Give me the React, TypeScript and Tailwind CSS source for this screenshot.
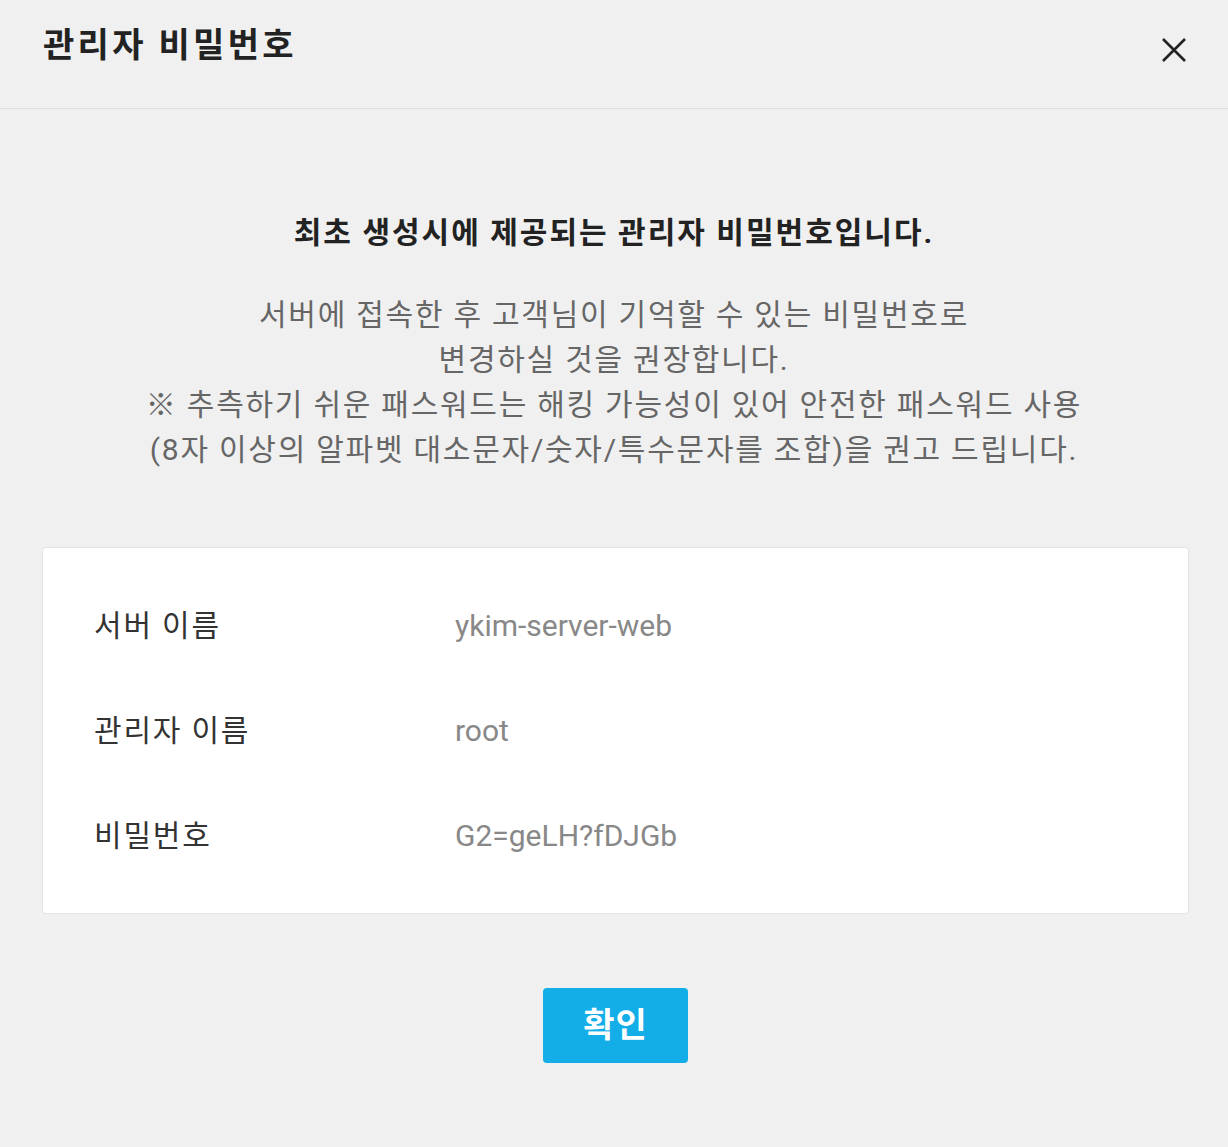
import React from "react";

const rows = [
  { label: "서버 이름", value: "ykim-server-web" },
  { label: "관리자 이름", value: "root" },
  { label: "비밀번호", value: "G2=geLH?fDJGb" },
];

export default function App() {
  return (
    <div
      className="min-h-[1147px] w-full bg-[#f0f0f0] text-[#222]"
      style={{ fontFamily: "Roboto, 'Noto Sans CJK KR', sans-serif" }}
    >
      {/* header */}
      <div className="flex h-[109px] items-start justify-between border-b border-[#e0e0e0] pl-[43px] pr-[40px]">
        <h1 className="mt-[20px] text-[34px] font-bold leading-[50px] tracking-[3.3px] text-[#222]">관리자 비밀번호</h1>
        <button className="mt-[36px] flex h-[28px] w-[28px] items-center justify-center text-[#222]">
          <svg width="26" height="26" viewBox="0 0 26 26" fill="none" stroke="currentColor" strokeWidth="2.6">
            <path d="M2 2L24 24M24 2L2 24" />
          </svg>
        </button>
      </div>

      {/* body */}
      <div className="flex flex-col items-center px-[40px] pt-[101px]">
        <p className="text-[30px] font-bold leading-[45px] tracking-[2px] text-[#222]">
          최초 생성시에 제공되는 관리자 비밀번호입니다.
        </p>
        <p className="mt-[37px] text-center text-[30px] leading-[45px] tracking-[1.75px] text-[#666]">
          서버에 접속한 후 고객님이 기억할 수 있는 비밀번호로
          <br />
          변경하실 것을 권장합니다.
          <br />※ 추측하기 쉬운 패스워드는 해킹 가능성이 있어 안전한 패스워드 사용
          <br />
          (8자 이상의 알파벳 대소문자/숫자/특수문자를 조합)을 권고 드립니다.
        </p>
      </div>

      <div className="ml-[42px] mr-[39px] pt-[75px]">
        <div className="rounded-[4px] border border-[#e4e4e4] bg-white px-[51px] py-[25px]">
          {rows.map((r) => (
            <div key={r.label} className="flex h-[105px] items-center text-[30px]">
              <div className="w-[361px] tracking-[1.8px] text-[#333]">{r.label}</div>
              <div className="text-[#888]">{r.value}</div>
            </div>
          ))}
        </div>
      </div>

      <div className="flex justify-center pl-[3px] pt-[74px]">
        <button className="h-[75px] w-[145px] rounded-[4px] bg-[#13ade8] text-[34px] font-bold tracking-[1px] text-white">
          확인
        </button>
      </div>
    </div>
  );
}
